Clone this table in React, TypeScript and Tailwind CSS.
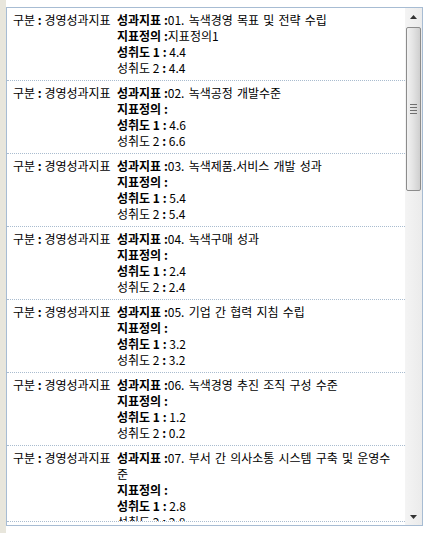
const items = [
  { title: "01. 녹색경영 목표 및 전략 수립", def: "지표정의1", a1: "4.4", a2: "4.4" },
  { title: "02. 녹색공정 개발수준", def: "", a1: "4.6", a2: "6.6" },
  { title: "03. 녹색제품.서비스 개발 성과", def: "", a1: "5.4", a2: "5.4" },
  { title: "04. 녹색구매 성과", def: "", a1: "2.4", a2: "2.4" },
  { title: "05. 기업 간 협력 지침 수립", def: "", a1: "3.2", a2: "3.2" },
  { title: "06. 녹색경영 추진 조직 구성 수준", def: "", a1: "1.2", a2: "0.2" },
  { title: "07. 부서 간 의사소통 시스템 구축 및 운영수준", def: "", a1: "2.8", a2: "2.8" },
];

function Row({ item }: { item: (typeof items)[number] }) {
  return (
    <div className="flex pl-[6px] pr-[10px] pt-[4px] pb-[4px] border-b border-dotted border-[#a9bccf]">
      <div className="w-[104px] shrink-0 leading-[16px]">
        구분 <b>:</b> 경영성과지표
      </div>
      <div className="flex-1 leading-[16px] break-all">
        <div>
          <b>성과지표 :</b>
          <span className="[word-spacing:1.5px]">{item.title}</span>
        </div>
        <div>
          <b>지표정의 :</b>
          {item.def}
        </div>
        <div>
          <b>성취도 1 :</b> {item.a1}
        </div>
        <div>
          성취도 2 <b>:</b> {item.a2}
        </div>
      </div>
    </div>
  );
}

function Scrollbar() {
  return (
    <div className="w-[17px] shrink-0 flex flex-col bg-gradient-to-r from-[#f4f4f4] to-[#ebebeb]">
      <div className="h-[17px] flex items-center justify-center">
        <svg width="7" height="4" viewBox="0 0 7 4">
          <path d="M3.5 0 L7 4 L0 4 Z" fill="#333" />
        </svg>
      </div>
      <div className="h-[2px]" />
      <div className="h-[164px] mx-[1px] border border-[#8c8c8c] rounded-[2px] bg-gradient-to-r from-[#f2f2f2] via-[#e2e2e2] to-[#cfcfcf] flex items-center justify-center">
        <div className="flex flex-col gap-[2px]">
          <div className="w-[7px] h-[1px] bg-[#6f6f6f]" />
          <div className="w-[7px] h-[1px] bg-[#6f6f6f]" />
          <div className="w-[7px] h-[1px] bg-[#6f6f6f]" />
          <div className="w-[7px] h-[1px] bg-[#6f6f6f]" />
        </div>
      </div>
      <div className="flex-1" />
      <div className="h-[17px] flex items-center justify-center">
        <svg width="7" height="4" viewBox="0 0 7 4">
          <path d="M0 0 L7 0 L3.5 4 Z" fill="#333" />
        </svg>
      </div>
    </div>
  );
}

export default function App() {
  return (
    <div
      className="w-[430px] h-[533px] bg-white flex text-[12px] text-black"
      style={{ fontFamily: '"Noto Sans CJK KR", "Noto Sans", sans-serif' }}
    >
      <div className="w-[6px] shrink-0 bg-[#e8e6dc]" />
      <div className="pt-[7px]">
        <div className="w-[417px] h-[519px] border border-[#a7bcd3] bg-white flex">
          <div className="flex-1 flex flex-col">
            <div className="h-[514px] overflow-hidden border-b border-dotted border-[#a9bccf]">
              {items.map((it) => (
                <Row key={it.title} item={it} />
              ))}
            </div>
          </div>
          <Scrollbar />
        </div>
      </div>
    </div>
  );
}
